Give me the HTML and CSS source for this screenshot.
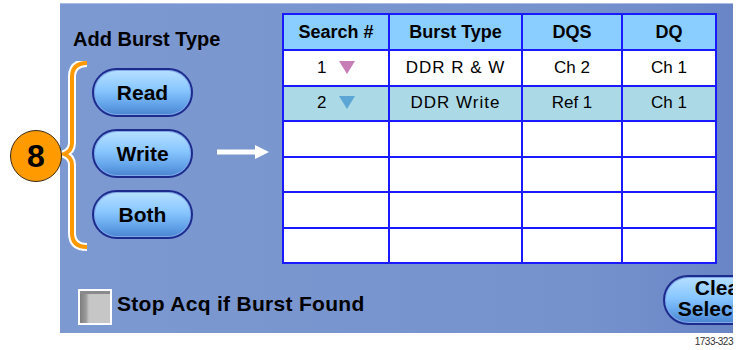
FILE: index.html
```html
<!DOCTYPE html>
<html>
<head>
  <title>Add Burst Type</title>
  <link rel="stylesheet" href="styles.css">
</head>
<body>
  <div class="figure">
    <div class="panel">
      <div class="top-row">
        <div class="burst-col">
          <h2 class="title">Add Burst Type</h2>
          <div class="burst-buttons">
            <button class="pill">Read</button>
            <button class="pill">Write</button>
            <button class="pill">Both</button>
          </div>
        </div>

        <table class="search-table">
          <colgroup>
            <col class="c-search">
            <col class="c-type">
            <col class="c-dqs">
            <col class="c-dq">
          </colgroup>
          <tr class="head">
            <th>Search #</th>
            <th>Burst Type</th>
            <th>DQS</th>
            <th>DQ</th>
          </tr>
          <tr>
            <td>1 <svg class="marker" width="16" height="14" viewBox="0 0 16 14"><polygon points="0,1 16,1 8,14" fill="#c77db5"/></svg></td>
            <td class="spaced">DDR R &amp; W</td>
            <td>Ch 2</td>
            <td>Ch 1</td>
          </tr>
          <tr class="selected">
            <td>2 <svg class="marker" width="16" height="14" viewBox="0 0 16 14"><polygon points="0,1 16,1 8,14" fill="#5ca6d6"/></svg></td>
            <td class="spaced">DDR Write</td>
            <td>Ref 1</td>
            <td>Ch 1</td>
          </tr>
          <tr><td></td><td></td><td></td><td></td></tr>
          <tr><td></td><td></td><td></td><td></td></tr>
          <tr><td></td><td></td><td></td><td></td></tr>
          <tr><td></td><td></td><td></td><td></td></tr>
        </table>
      </div>

      <div class="bottom-row">
        <span class="checkbox"></span>
        <span class="check-label">Stop Acq if Burst Found</span>
        <button class="pill clear-btn">Clear<br>Selected</button>
      </div>
    </div>

    <div class="fig-id">1733-323</div>

    <!-- callout annotations -->
    <svg class="bracket" width="30" height="196" viewBox="0 0 30 196">
      <path d="M27 2 Q12 2 12 16 L12 82 Q12 90 4 93 Q12 96 12 104 L12 172 Q12 186 27 186" fill="none" stroke="#fff" stroke-width="8"/>
      <path d="M27 2 Q12 2 12 16 L12 82 Q12 90 4 93 Q12 96 12 104 L12 172 Q12 186 27 186" fill="none" stroke="#ff9900" stroke-width="4"/>
    </svg>
    <div class="callout">8</div>
    <svg class="arrow" width="52" height="16" viewBox="0 0 52 16">
      <polygon points="0,5.5 38,5.5 38,1 52,8 38,15 38,10.5 0,10.5" fill="#fff"/>
    </svg>
  </div>
</body>
</html>
```

FILE: styles.css
```css
body {
  margin: 0;
  background-color: #fff;
  font-family: "Liberation Sans", Arial, sans-serif;
}

.figure {
  position: relative;
  width: 739px;
  height: 350px;
  padding: 3px 0 0 60px;
  box-sizing: border-box;
}

.panel {
  width: 673px;
  height: 330px;
  box-sizing: border-box;
  padding: 9px 0 0 13px;
  border-top: 1px solid #a9bbe3;
  background: linear-gradient(to right, #7c99d1 0%, #7692cd 78%, #6a85c5 100%);
  overflow: hidden;
  display: flex;
  flex-direction: column;
}

.top-row {
  display: flex;
  align-items: flex-start;
}

.burst-col {
  width: 209px;
  flex-shrink: 0;
}

.title {
  margin: 16px 0 0 0;
  font-size: 20px;
  line-height: 20px;
  font-weight: bold;
  color: #000;
}

.burst-buttons {
  display: flex;
  flex-direction: column;
  gap: 12px;
  margin: 19px 0 0 19px;
}

.pill {
  width: 101px;
  height: 49px;
  padding: 0;
  border: 2px solid #1d2b8e;
  border-radius: 25px;
  background: linear-gradient(to bottom, #b6e0ff 0%, #88c6ff 45%, #5f9fe6 80%, #4b84cf 100%);
  box-shadow: inset 0 0 0 1px #7fa8e8;
  font-family: "Liberation Sans", Arial, sans-serif;
  font-size: 21px;
  font-weight: bold;
  color: #000;
  cursor: pointer;
}

.search-table {
  width: 433px;
  border-collapse: collapse;
  table-layout: fixed;
  background-color: #fff;
  border: 2px solid #1a1aff;
}

.c-search { width: 106px; }
.c-type { width: 133px; }
.c-dqs { width: 100px; }
.c-dq { width: 94px; }

.search-table th,
.search-table td {
  border: 2px solid #1a1aff;
  height: 33.5px;
  padding: 0;
  text-align: center;
  color: #000;
}

.search-table th {
  height: 34px;
  background-color: #8acdff;
  font-size: 18px;
  font-weight: bold;
}

.search-table td {
  font-size: 17px;
}

.search-table .selected td {
  background-color: #acd9e6;
}

.spaced {
  letter-spacing: 1px;
}

.marker {
  vertical-align: -1px;
  margin-left: 8px;
}

.bottom-row {
  margin-top: auto;
  padding: 0 0 8px 5px;
  display: flex;
  align-items: flex-end;
}

.checkbox {
  width: 30px;
  height: 32px;
  border: 2px solid #fff;
  background: linear-gradient(to right, #7e7e7e 0px, #9a9a9a 6px, #c6c6c6 9px, #c6c6c6 100%);
  box-shadow: inset 0 3px 0 #8a8a8a;
}

.check-label {
  margin: 0 0 9px 5px;
  font-size: 21px;
  font-weight: bold;
  letter-spacing: 0.3px;
  color: #000;
}

.clear-btn {
  width: 116px;
  height: 50px;
  padding-bottom: 4px;
  margin-left: auto;
  margin-right: -46px;
  flex-shrink: 0;
  line-height: 21px;
}

.fig-id {
  position: absolute;
  right: 6px;
  bottom: 3px;
  font-size: 10px;
  color: #333;
  letter-spacing: -0.5px;
}

.bracket {
  position: absolute;
  left: 60px;
  top: 61px;
}

.callout {
  position: absolute;
  left: 10px;
  top: 130px;
  width: 50px;
  height: 50px;
  border: 1.5px solid #3a2a10;
  border-radius: 50%;
  background-color: #ff9a00;
  font-size: 32px;
  font-weight: bold;
  line-height: 50px;
  text-align: center;
  color: #000;
}

.arrow {
  position: absolute;
  left: 217px;
  top: 144px;
}
```
